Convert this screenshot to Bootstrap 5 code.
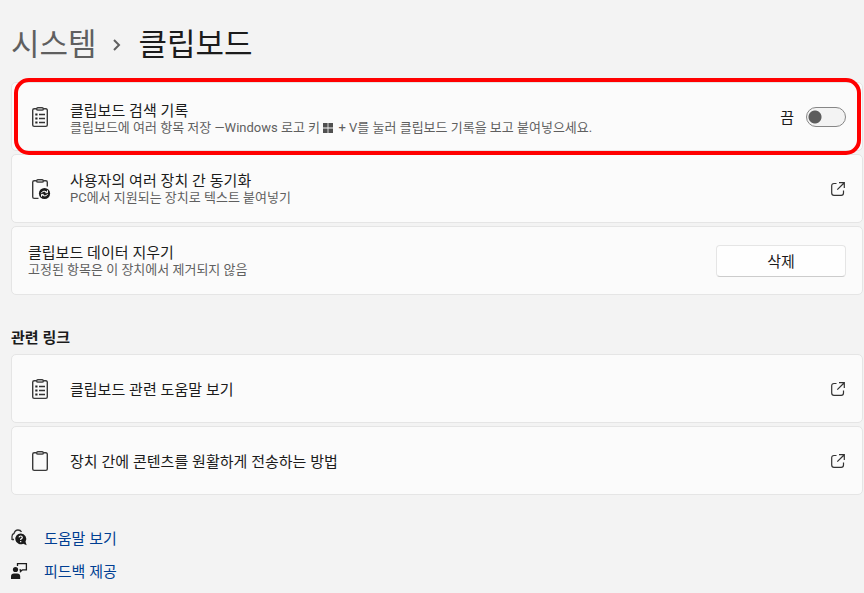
<!DOCTYPE html>
<html lang="ko">
<head>
<meta charset="utf-8">
<meta name="viewport" content="width=device-width, initial-scale=1">
<title>클립보드</title>
<link href="https://cdn.jsdelivr.net/npm/bootstrap@5.3.0/dist/css/bootstrap.min.css" rel="stylesheet">
<style>
body{background:#f3f3f3;color:#1b1b1b;font-family:"Open Sans","Noto Sans CJK KR",sans-serif;font-size:15px;line-height:18px}
.page{padding:23px 1px 12px 11px}
.crumbs{font-size:31px;line-height:40px;margin-bottom:19px}
.crumbs a,.crumbs svg{color:#5f5f5f}
.crumbs h1{font-size:inherit;line-height:inherit;font-weight:400}
.crumb-sep{margin:4px 17px 0 15px}
.stack{gap:3px}
.setting{background:#fbfbfb;border:1px solid #e5e5e5;border-radius:5px;min-height:69px;padding:0 16px;color:inherit}
.setting-icon{width:24px;height:24px;margin-right:18px}
.sub{font-family:Roboto,"Noto Sans CJK KR",sans-serif;font-size:13px;line-height:18px;color:#5f5f5f}
.win-key{vertical-align:-1px;margin-right:2px}
.marked::after{content:"";position:absolute;inset:-5px 1px -5px 2px;border:4px solid #f00;border-radius:15px;pointer-events:none}
.toggle.form-check-input{width:40px;height:20px;margin:0;background-color:#f3f3f3;border:1px solid #868686;
 background-image:radial-gradient(circle at 8px 9px,#5d5d5d 0 6px,transparent 7px);background-size:100% 100%;background-position:0 0}
.toggle.form-check-input:checked{background-color:#005fb8;background-image:radial-gradient(circle at 29px 9px,#fff 0 6px,transparent 7px)}
.delete-btn{width:130px;height:32px;padding:0;font-size:15px;line-height:20px;background:#fefefe;border:1px solid #e5e5e5;border-bottom-color:#ccc;border-radius:4px;color:#1b1b1b}
.related{font-size:15px;line-height:20px;margin:32px 0 7px}
.help{gap:15px;margin-top:34px}
.help a{color:#003e92;gap:16px}
</style>
<script src="https://cdn.jsdelivr.net/npm/bootstrap@5.3.0/dist/js/bootstrap.bundle.min.js"></script>
</head>
<body>
<svg class="d-none" aria-hidden="true">
 <symbol id="board" viewBox="0 0 24 24"><g fill="none" stroke="#3a3a3a" stroke-width="1.4"><path d="M9 3.800H6.200Q4.700 3.800 4.700 5.300V20Q4.700 21.400 6.200 21.400H17.800Q19.300 21.400 19.300 20V5.300Q19.300 3.800 17.800 3.800H15"/><rect x="8.700" y="2.600" width="6.600" height="2.500" rx="1.200" fill="#ccc"/></g></symbol>
 <symbol id="board-list" viewBox="0 0 24 24"><use href="#board"/><path d="M7.300 9.500h2.200M7.300 13.500h2.200M7.300 17.500h2.200" stroke="#222" stroke-width="2"/><path d="M11 9.500h6M11 13.500h6M11 17.500h6" stroke="#333" stroke-width="1.300"/></symbol>
 <symbol id="board-sync" viewBox="0 0 24 24"><g fill="none" stroke="#3a3a3a" stroke-width="1.400"><path d="M9 3.800H6.200Q4.700 3.800 4.700 5.300V20Q4.700 21.400 6.200 21.400H10.500M15 3.800H17.800Q19.300 3.800 19.300 5.300V9.500"/><rect x="8.700" y="2.600" width="6.600" height="2.500" rx="1.200" fill="#ccc"/></g><circle cx="16.500" cy="16.500" r="5.600" fill="#1b1b1b"/><path d="M13.300 16.200Q14.300 13.700 17 14.200L19.300 15.500M19.500 13.300V15.700H17.300M19.600 17Q18.700 19.400 16 18.900L13.700 17.600M13.500 19.700V17.400H15.700" fill="none" stroke="#fff" stroke-width="1"/></symbol>
 <symbol id="open" viewBox="0 0 16 16"><path d="M6.500 2.500H4Q1.700 2.500 1.700 4.800V12Q1.700 14.300 4 14.300H11.200Q13.500 14.300 13.500 12V9.500M9 1.700H14.300V7M14 2L7.300 8.700" fill="none" stroke="#333" stroke-width="1.200"/></symbol>
</svg>
<main class="page">
 <nav class="crumbs d-flex align-items-center" aria-label="경로">
  <a class="text-decoration-none" href="#">시스템</a>
  <svg class="crumb-sep" width="10" height="14" viewBox="0 0 10 14" aria-hidden="true"><path d="M2 2l5 5-5 5" fill="none" stroke="currentColor" stroke-width="2"/></svg>
  <h1 class="m-0">클립보드</h1>
 </nav>
 <section class="stack d-flex flex-column">
  <div class="setting marked position-relative d-flex align-items-center">
   <svg class="setting-icon flex-shrink-0" aria-hidden="true"><use href="#board-list"/></svg>
   <div class="flex-grow-1 pt-1">
    <label class="d-block" for="history">클립보드 검색 기록</label>
    <div class="sub">클립보드에 여러 항목 저장 —Windows 로고 키 <svg class="win-key" width="10" height="10" viewBox="0 0 10 10" role="img" aria-label="Windows"><path d="M0 0h4.600v4.600H0zM5.400 0H10v4.600H5.400zM0 5.400h4.600V10H0zM5.400 5.400H10V10H5.400z" fill="#505050"/></svg> + V를 눌러 클립보드 기록을 보고 붙여넣으세요.</div>
   </div>
   <div class="form-switch d-flex align-items-center p-0 gap-2">
    <label class="me-1" for="history">끔</label>
    <input class="form-check-input toggle" type="checkbox" role="switch" id="history">
   </div>
  </div>
  <a class="setting d-flex align-items-center text-decoration-none" href="#">
   <svg class="setting-icon flex-shrink-0" aria-hidden="true"><use href="#board-sync"/></svg>
   <div class="flex-grow-1"><div>사용자의 여러 장치 간 동기화</div><div class="sub">PC에서 지원되는 장치로 텍스트 붙여넣기</div></div>
   <svg width="16" height="16" aria-hidden="true"><use href="#open"/></svg>
  </a>
  <div class="setting d-flex align-items-center">
   <div class="flex-grow-1"><div>클립보드 데이터 지우기</div><div class="sub">고정된 항목은 이 장치에서 제거되지 않음</div></div>
   <button class="btn delete-btn" type="button">삭제</button>
  </div>
 </section>
 <h2 class="related fw-bold">관련 링크</h2>
 <section class="stack d-flex flex-column">
  <a class="setting d-flex align-items-center text-decoration-none" href="#">
   <svg class="setting-icon flex-shrink-0" aria-hidden="true"><use href="#board-list"/></svg>
   <span class="flex-grow-1">클립보드 관련 도움말 보기</span>
   <svg width="16" height="16" aria-hidden="true"><use href="#open"/></svg>
  </a>
  <a class="setting d-flex align-items-center text-decoration-none" href="#">
   <svg class="setting-icon flex-shrink-0" aria-hidden="true"><use href="#board"/></svg>
   <span class="flex-grow-1">장치 간에 콘텐츠를 원활하게 전송하는 방법</span>
   <svg width="16" height="16" aria-hidden="true"><use href="#open"/></svg>
  </a>
 </section>
 <div class="help d-flex flex-column align-items-start">
  <a class="d-flex align-items-center text-decoration-none" href="#">
   <svg width="17" height="18" viewBox="0 0 17 18" aria-hidden="true"><path d="M1 11V7.500Q1 5 3 4.500Q4 1 7 1Q9.500 1 10.500 3M1 10.500h2" fill="none" stroke="#333" stroke-width="1.300"/><path d="M9.700 4.500a5.400 5.400 0 1 0 2.500 10.200l3.500 1.500-1.200-3.500A5.400 5.400 0 0 0 9.700 4.500z" fill="#1b1b1b"/><path d="M8 8.300Q8.200 7 9.700 7T11.300 8.500Q11.300 9.300 9.700 10.200V11M9.700 12v1.200" fill="none" stroke="#fff" stroke-width="1.200"/></svg>
   도움말 보기</a>
  <a class="d-flex align-items-center text-decoration-none" href="#">
   <svg width="17" height="18" viewBox="0 0 17 18" aria-hidden="true"><circle cx="4.500" cy="7.500" r="2.600" fill="#1b1b1b"/><path d="M0 17V14.500Q0 11.500 3 11.500H6.200Q9.200 11.500 9.200 14.500V17z" fill="#1b1b1b"/><path d="M6.500 4V1.700H15.400V7.800H11.500L9.500 9.600V7.800H8.500" fill="none" stroke="#1b1b1b" stroke-width="1.300"/></svg>
   피드백 제공</a>
 </div>
</main>
</body>
</html>
